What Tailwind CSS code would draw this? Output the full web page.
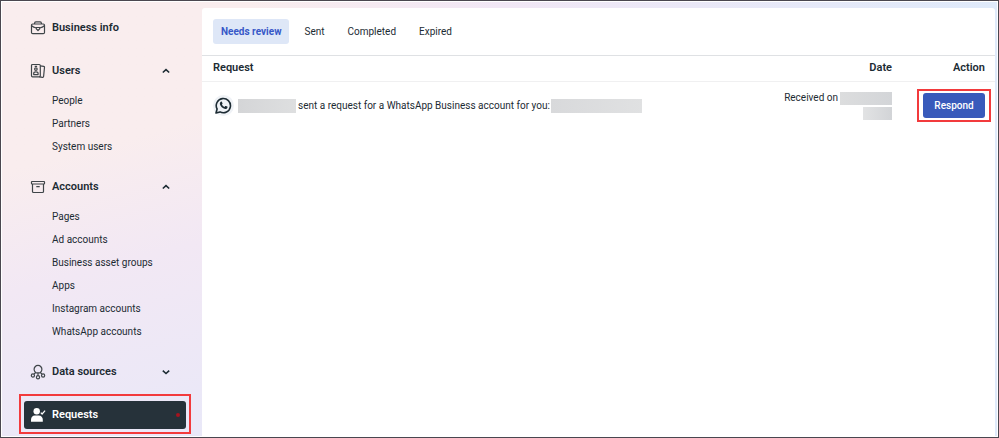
<!DOCTYPE html>
<html lang="en">
<head>
    <meta charset="UTF-8">
    <meta name="viewport" content="width=device-width, initial-scale=1.0">
    <title>Business settings - Requests</title>
    <script src="https://cdn.jsdelivr.net/npm/@tailwindcss/browser@4"></script>
</head>
<body class="h-screen border border-[#4a474f] bg-white p-px font-[Roboto,sans-serif] text-[10px] leading-4 text-[#1c2b33]">

    <div class="flex h-full bg-linear-to-r from-[#f9edee] from-25% via-[#f1e7f5] to-[#dfeafa]">

        <!-- Sidebar -->
        <nav class="w-[200px] shrink-0 bg-linear-165 from-[#f9edee] from-35% via-[#f2e8f4] via-60% to-[#e9e8f8] pt-[13px] pr-4 pl-[22px]">
            <a href="#" class="flex h-[26px] items-center gap-[6px] pl-[6px] text-[11px] font-semibold">
                <svg class="size-4 shrink-0" viewBox="0 0 16 16" fill="none" stroke="#3f4549" stroke-width="1.2" stroke-linejoin="round">
                    <path d="M4.600 4V3.200c0-.9.400-1.300 1.300-1.300h4.200c.9 0 1.300.4 1.300 1.300V4"/>
                    <rect x="1.500" y="4" width="13" height="9.600" rx="1.200"/>
                    <path d="M1.600 5.800c1.400 1.300 3 1.900 4.700 2.200M14.400 5.800c-1.400 1.300-3 1.900-4.700 2.200M6.300 7.500h3.400v1.300L8 10.500 6.300 8.800z"/>
                </svg>
                Business info
            </a>

            <button type="button" class="mt-[17px] flex h-[26px] w-full items-center gap-[6px] pl-[6px] text-[11px] font-semibold">
                <svg class="size-4 shrink-0" viewBox="0 0 16 16" fill="none" stroke="#3f4549" stroke-width="1.2" stroke-linejoin="round">
                    <rect x="1.500" y="1.500" width="8.800" height="12.300" rx="1"/>
                    <path d="M10.300 2.800l3.400.5c.6.1.9.4.8 1l-.9 9.200c-.1.600-.4.900-1 .800L9.300 13.800"/>
                    <circle cx="5.900" cy="6.100" r="1.300"/>
                    <path d="M3.700 11.600v-1c0-1.100.8-1.800 2.200-1.800s2.200.7 2.200 1.800v1zM4.700 3.400h2.400"/>
                </svg>
                Users
                <svg class="mr-[15px] ml-auto size-[10px]" viewBox="0 0 10 10" fill="none" stroke="currentColor" stroke-width="1.6"><path d="M1.800 6.500 5 3.600l3.200 2.900"/></svg>
            </button>
            <ul class="mt-[5px] pl-7">
                <li class="flex h-[23px] items-center"><a href="#">People</a></li>
                <li class="flex h-[23px] items-center"><a href="#">Partners</a></li>
                <li class="flex h-[23px] items-center"><a href="#">System users</a></li>
            </ul>

            <button type="button" class="mt-4 flex h-[26px] w-full items-center gap-[6px] pl-[6px] text-[11px] font-semibold">
                <svg class="size-4 shrink-0" viewBox="0 0 16 16" fill="none" stroke="#3f4549" stroke-width="1.2" stroke-linejoin="round">
                    <rect x="1.500" y="2.500" width="13" height="2.500" rx=".5"/>
                    <path d="M2.500 5v7.500c0 .6.300 1 1 1h9c.7 0 1-.4 1-1V5M6.300 7.600h3.400"/>
                </svg>
                Accounts
                <svg class="mr-[15px] ml-auto size-[10px]" viewBox="0 0 10 10" fill="none" stroke="currentColor" stroke-width="1.6"><path d="M1.800 6.500 5 3.600l3.200 2.900"/></svg>
            </button>
            <ul class="mt-[5px] pl-7">
                <li class="flex h-[23px] items-center"><a href="#">Pages</a></li>
                <li class="flex h-[23px] items-center"><a href="#">Ad accounts</a></li>
                <li class="flex h-[23px] items-center"><a href="#">Business asset groups</a></li>
                <li class="flex h-[23px] items-center"><a href="#">Apps</a></li>
                <li class="flex h-[23px] items-center"><a href="#">Instagram accounts</a></li>
                <li class="flex h-[23px] items-center"><a href="#">WhatsApp accounts</a></li>
            </ul>

            <button type="button" class="mt-4 flex h-[26px] w-full items-center gap-[6px] pl-[6px] text-[11px] font-semibold">
                <svg class="size-4 shrink-0" viewBox="0 0 16 16" fill="none" stroke="#3f4549" stroke-width="1.2">
                    <path d="M5.700 8.500a3.900 3.900 0 1 1 4.600 0M5.700 8.300 4 10.200M10.300 8.300l1.700 1.900M8 8.800v2.800M5.700 8.800h4.600"/>
                    <circle cx="2.900" cy="11.500" r="1.600"/>
                    <circle cx="8" cy="13.200" r="1.600"/>
                    <circle cx="13.100" cy="11.500" r="1.600"/>
                </svg>
                Data sources
                <svg class="mr-[15px] ml-auto size-[10px]" viewBox="0 0 10 10" fill="none" stroke="currentColor" stroke-width="1.6"><path d="M1.800 3.600 5 6.500l3.200-2.900"/></svg>
            </button>

            <div class="relative mt-4">
                <a href="#" aria-current="page" class="flex h-7 items-center gap-[6px] rounded-[3px] bg-[#26323a] pl-[6px] text-[11px] font-semibold text-white">
                    <svg class="size-4 shrink-0" viewBox="0 0 16 16" fill="none">
                        <circle cx="6.700" cy="4.200" r="3.200" fill="#fff"/>
                        <path d="M1 14.800v-2C1 10.200 2.600 8.500 4.800 8.500h4c2.200 0 4 1.700 4 4.300v2z" fill="#fff"/>
                        <path d="m10.800 5.600 1.300 1.400 3-3.300" stroke="#fff" stroke-width="1.200"/>
                    </svg>
                    Requests
                    <span class="mr-[6px] ml-auto size-1 rounded-full bg-[#a5141e]"></span>
                </a>
                <span class="pointer-events-none absolute -inset-x-[5px] -top-[7px] -bottom-[5px] border-2 border-[#f23a3c]"></span>
            </div>
        </nav>

        <!-- Requests panel -->
        <main class="mt-[6px] mr-[2px] min-w-0 flex-1 rounded-t-[3px] bg-white">
            <div role="tablist" class="flex gap-[7px] border-b border-[#dfe1e4] px-[11px] pt-[11px] pb-[11px]">
                <button type="button" role="tab" aria-selected="true" class="h-[25px] rounded-[3px] bg-[#dee7f7] px-2 font-bold text-[#3758c8]">Needs review</button>
                <button type="button" role="tab" aria-selected="false" class="h-[25px] rounded-[3px] px-2">Sent</button>
                <button type="button" role="tab" aria-selected="false" class="h-[25px] rounded-[3px] px-2">Completed</button>
                <button type="button" role="tab" aria-selected="false" class="h-[25px] rounded-[3px] px-2">Expired</button>
            </div>

            <table class="w-full">
                <thead>
                    <tr class="h-[25px] border-b border-[#f0f0f1] text-[11px]">
                        <th class="pl-[11px] text-left font-semibold">Request</th>
                        <th class="w-[130px] text-right font-semibold">Date</th>
                        <th class="w-[103px] pr-[10px] text-right font-semibold">Action</th>
                    </tr>
                </thead>
                <tbody>
                    <tr class="h-[49px]">
                        <td class="pl-[11px]">
                            <div class="flex items-center">
                                <span class="mr-1 flex size-[21px] items-center justify-center rounded-full bg-[#eff2f6]">
                                    <svg class="size-[17px]" viewBox="0 0 17 17" fill="none">
                                        <path d="M1 16l1.100-4A7.100 7.100 0 1 1 5 14.900z" stroke="#1c2b33" stroke-width="1.600" stroke-linejoin="round"/>
                                        <path d="M5.800 4.700c.4-.3.900-.2 1.100.2l.6 1.300c.1.300 0 .5-.2.8l-.4.500c.6 1.100 1.400 1.900 2.600 2.400l.7-.8c.2-.2.400-.2.700-.1l1.300.6c.3.200.4.400.3.800-.2 1-1.200 1.700-2.300 1.500-2.700-.5-4.700-2.500-5.300-4.700-.2-1 .2-2 .9-2.500z" fill="#1c2b33"/>
                                    </svg>
                                </span>
                                <span class="h-[14px] w-[58px] bg-linear-to-r from-[#d4d5d7] to-[#dedfe0]"></span>
                                <span class="mr-px ml-[2px] whitespace-nowrap">sent a request for a WhatsApp Business account for you:</span>
                                <span class="h-[14px] w-[91px] bg-linear-to-r from-[#d8d9db] to-[#e0e1e2]"></span>
                            </div>
                        </td>
                        <td>
                            <div class="flex flex-col items-end gap-[2px]">
                                <div class="flex h-[13px] items-center gap-[2px] whitespace-nowrap">Received on <span class="h-[13px] w-[52px] bg-linear-to-r from-[#dcddde] to-[#d3d5d8]"></span></div>
                                <span class="h-[13px] w-[29px] bg-linear-to-r from-[#e2e3e4] to-[#d2d4d7]"></span>
                            </div>
                        </td>
                        <td class="pr-[10px]">
                            <div class="relative ml-auto w-fit">
                                <button type="button" class="block h-[25px] w-[62px] rounded-[3px] bg-[#385abb] font-medium text-white">Respond</button>
                                <span class="pointer-events-none absolute -inset-x-[6px] -inset-y-1 border-2 border-[#f23a3c]"></span>
                            </div>
                        </td>
                    </tr>
                </tbody>
            </table>
        </main>
    </div>

</body>
</html>
